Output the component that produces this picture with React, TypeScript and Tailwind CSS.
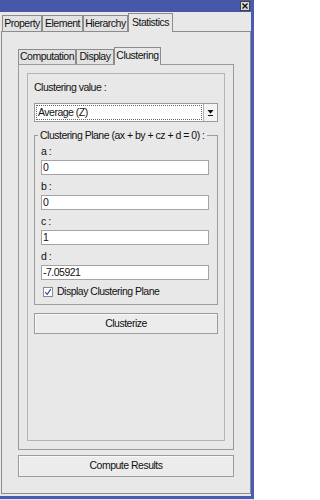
import React from "react";

function OuterTab({ label, w, selected }: { label: string; w: string; selected?: boolean }) {
  return selected ? (
    <div className={`${w} h-[19px] -mb-px relative z-10 bg-[#e8e8e8] border-t border-l border-r border-[#8c8c8c] flex items-center justify-center pb-[1px] shrink-0`}>
      {label}
    </div>
  ) : (
    <div className={`${w} h-[16px] bg-[#e2e2e2] border-t border-l border-r border-[#8c8c8c] flex items-center justify-center shrink-0`}>
      {label}
    </div>
  );
}

function InnerTab({ label, w, selected }: { label: string; w: string; selected?: boolean }) {
  return selected ? (
    <div className={`${w} h-[18px] -mb-px relative z-10 bg-[#e8e8e8] border-t border-l border-r border-[#8c8c8c] flex items-center justify-center pb-[1px] shrink-0`}>
      {label}
    </div>
  ) : (
    <div className={`${w} h-[15px] bg-[#e2e2e2] border-t border-l border-r border-[#8c8c8c] flex items-center justify-center shrink-0`}>
      {label}
    </div>
  );
}

function Field({ label, value, first }: { label: string; value: string; first?: boolean }) {
  return (
    <div className={first ? "flex flex-col" : "flex flex-col mt-[3px]"}>
      <div className="h-[17px] leading-[17px]">{label}</div>
      <div className="h-[15px] bg-white border border-[#a4a4a4] pl-[1px] leading-[13px] text-[#111]">{value}</div>
    </div>
  );
}

export default function App() {
  return (
    <div className="w-[254px] h-[500px] bg-[#e8e8e8]">
      <div className="w-[254px] h-[499px] border-r-[3px] border-b-[3px] border-[#4a5bb4] flex flex-col bg-[#e8e8e8] font-['Liberation_Sans',Arial,sans-serif] text-[10.5px] tracking-[-0.5px] text-[#111]">
        <div className="h-[12px] shrink-0 bg-[#4858a8] flex justify-end">
          <div className="w-[10px] h-[10px] mt-[1px] mr-[1px] bg-[#d6d6d6] border border-[#444] flex items-center justify-center">
            <svg width="6" height="6" viewBox="0 0 6 6">
              <path d="M0.5 0.5L5.5 5.5M5.5 0.5L0.5 5.5" stroke="#111" strokeWidth="1.3" />
            </svg>
          </div>
        </div>

        <div className="h-[18px] mt-[1px] pl-[2px] flex items-end shrink-0">
          <OuterTab label="Property" w="w-[40px]" />
          <OuterTab label="Element" w="w-[41px]" />
          <OuterTab label="Hierarchy" w="w-[45px]" />
          <OuterTab label="Statistics" w="w-[45px]" selected />
        </div>

        <div className="ml-[1px] w-[250px] flex-1 mb-[2px] border border-[#8c8c8c] flex flex-col pt-[15px] px-[16px] pb-[16px] min-h-0">
          <div className="h-[17px] flex items-end shrink-0">
            <InnerTab label="Computation" w="w-[58px]" />
            <InnerTab label="Display" w="w-[38px]" />
            <InnerTab label="Clustering" w="w-[47px]" selected />
          </div>

          <div className="flex-1 border border-[#9a9a9a] p-[8px] flex min-h-0">
            <div className="flex-1 border border-[#b4b4b4] px-[6px] pt-[6px] flex flex-col">
              <div className="h-[14px] leading-[14px]">Clustering value :</div>

              <div className="mt-[9px] h-[19px] bg-white border border-[#9a9a9a] flex">
                <div className="flex-1 m-[1px] border border-dotted border-[#666] pl-[1px] leading-[13px]">Average (Z)</div>
                <div className="w-[14px] border-l border-[#b0b0b0] bg-[#f4f4f4] flex items-center justify-center">
                  <svg width="7" height="8" viewBox="0 0 7 8">
                    <polygon points="0.5,1 6.5,1 3.5,4.8" fill="#111" />
                    <rect x="1" y="6" width="5" height="1" fill="#111" />
                  </svg>
                </div>
              </div>

              <div className="relative mt-[13px] border border-[#9c9c9c] pl-[6px] pr-[8px] pt-[7px] flex flex-col">
                <div className="absolute -top-[8px] left-[3px] px-[2px] h-[14px] leading-[14px] bg-[#e8e8e8]">
                  Clustering Plane (ax + by + cz + d = 0) :
                </div>
                <Field label="a :" value="0" first />
                <Field label="b :" value="0" />
                <Field label="c :" value="1" />
                <Field label="d :" value="-7.05921" />
                <div className="h-[24px] flex items-center">
                  <div className="ml-[2px] w-[10px] h-[10px] bg-white border border-[#8a8a8a] flex items-center justify-center">
                    <svg width="8" height="8" viewBox="0 0 8 8">
                      <path d="M1.2 4.2L3.2 6.4L6.8 1.2" stroke="#3348b8" strokeWidth="1.2" fill="none" />
                    </svg>
                  </div>
                  <span className="ml-[4px]">Display Clustering Plane</span>
                </div>
              </div>

              <div className="mt-[8px] h-[21px] bg-[#ececec] border border-[#9c9c9c] shadow-[inset_1px_1px_0_#f8f8f8] flex items-center justify-center">
                Clusterize
              </div>
            </div>
          </div>

          <div className="mt-[5px] h-[22px] shrink-0 bg-[#ececec] border border-[#9c9c9c] shadow-[inset_1px_1px_0_#f8f8f8] flex items-center justify-center">
            Compute Results
          </div>
        </div>
      </div>
    </div>
  );
}
